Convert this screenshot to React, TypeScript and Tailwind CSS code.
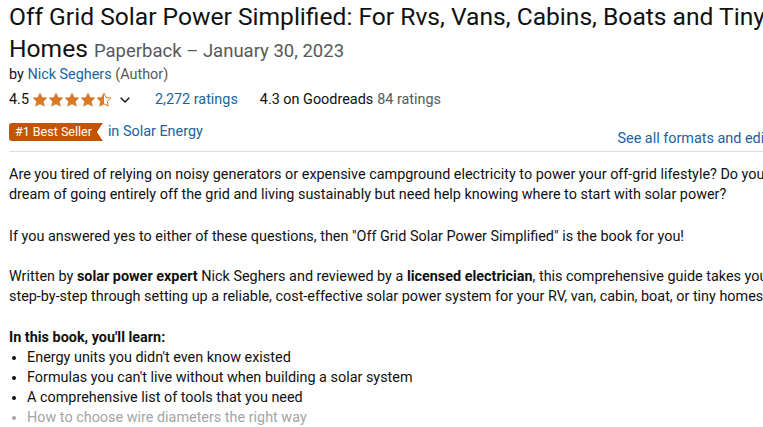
import { ChevronDown } from 'lucide-react'

const STAR = 'M8 1.2l2.05 4.3 4.7.6-3.45 3.25.88 4.65L8 11.75 3.82 14l.88-4.65L1.25 6.1l4.7-.6z'

function Stars({ value }: { value: number }) {
  return (
    <svg width="80" height="16" viewBox="0 0 80 16" className="block">
      <defs>
        <clipPath id="half">
          <rect x="0" y="0" width="8" height="16" />
        </clipPath>
      </defs>
      {[0, 1, 2, 3, 4].map((i) => {
        const full = value >= i + 1
        const half = !full && value > i
        return (
          <g key={i} transform={`translate(${i * 16} 0)`}>
            {full ? (
              <path d={STAR} fill="#de7921" stroke="#c56a1b" strokeWidth="0.6" strokeLinejoin="round" />
            ) : (
              <>
                <path d={STAR} fill="none" stroke="#de7921" strokeWidth="1" strokeLinejoin="round" />
                {half && <path d={STAR} fill="#de7921" clipPath="url(#half)" />}
              </>
            )}
          </g>
        )
      })}
    </svg>
  )
}

const bullets = [
  "Energy units you didn't even know existed",
  "Formulas you can't live without when building a solar system",
  'A comprehensive list of tools that you need',
]

export default function App() {
  return (
    <div
      className="w-[763px] h-[427px] overflow-hidden bg-white text-[#0f1111]"
      style={{ fontFamily: 'Roboto, "Liberation Sans", sans-serif' }}
    >
      <div className="w-[796px] pl-[9px] pt-[1px]">
        <h1 className="text-[24.6px] leading-[32px] font-normal">
          Off Grid Solar Power Simplified: For Rvs, Vans, Cabins, Boats and Tiny Homes{' '}
          <span className="text-[18.5px] text-[#565959]">Paperback – January 30, 2023</span>
        </h1>

        <div className="-mt-[2px] text-[14.4px] leading-[20px]">
          by <span className="text-[#2162a1]">Nick Seghers</span>{' '}
          <span className="text-[#565959]">(Author)</span>
        </div>

        <div className="mt-[5px] flex items-center h-[20px] text-[14.4px]">
          <span>4.5</span>
          <span className="ml-[3px]">
            <Stars value={4.5} />
          </span>
          <ChevronDown className="ml-[5px] w-[16px] h-[16px]" strokeWidth={2} />
          <span className="ml-[22px] text-[#2162a1]">2,272 ratings</span>
          <span className="ml-[22px]">4.3 on Goodreads</span>
          <span className="ml-[4px] text-[#565959]">84 ratings</span>
        </div>

        <div className="mt-[12px] flex items-start justify-between">
          <div className="flex items-center h-[20px]">
            <span
              className="h-[18px] pl-[6px] pr-[11px] flex items-center rounded-l-[3px] bg-[#c45500] text-white text-[12.5px]"
              style={{ clipPath: 'polygon(0 0, 100% 0, calc(100% - 6px) 50%, 100% 100%, 0 100%)' }}
            >
              #1 Best Seller
            </span>
            <span className="ml-[5px] text-[14.4px] text-[#2162a1]">in Solar Energy</span>
          </div>
          <span className="mt-[7px] text-[14.4px] leading-[20px] text-[#2162a1]">See all formats and editions</span>
        </div>

        <hr className="mt-[2px] border-t border-[#dddddd]" />

        <div className="mt-[13px] text-[14.4px] leading-[20px]">
          <p>
            Are you tired of relying on noisy generators or expensive campground electricity to power your off-grid
            lifestyle? Do you dream of going entirely off the grid and living sustainably but need help knowing where to
            start with solar power?
          </p>
          <p className="mt-[22px]">
            If you answered yes to either of these questions, then "Off Grid Solar Power Simplified" is the book for
            you!
          </p>
          <p className="mt-[20px]">
            Written by <b className="font-bold">solar power expert</b> Nick Seghers and reviewed by a{' '}
            <b className="font-bold">licensed electrician</b>, this comprehensive guide takes you step-by-step through
            setting up a reliable, cost-effective solar power system for your RV, van, cabin, boat, or tiny homes.
          </p>
          <p className="mt-[21px] font-bold">In this book, you'll learn:</p>
          <ul className="list-disc pl-[18px]">
            {bullets.map((b) => (
              <li key={b}>{b}</li>
            ))}
            <li className="text-[#a2a6a6] marker:text-[#a2a6a6]">How to choose wire diameters the right way</li>
          </ul>
        </div>
      </div>
    </div>
  )
}
